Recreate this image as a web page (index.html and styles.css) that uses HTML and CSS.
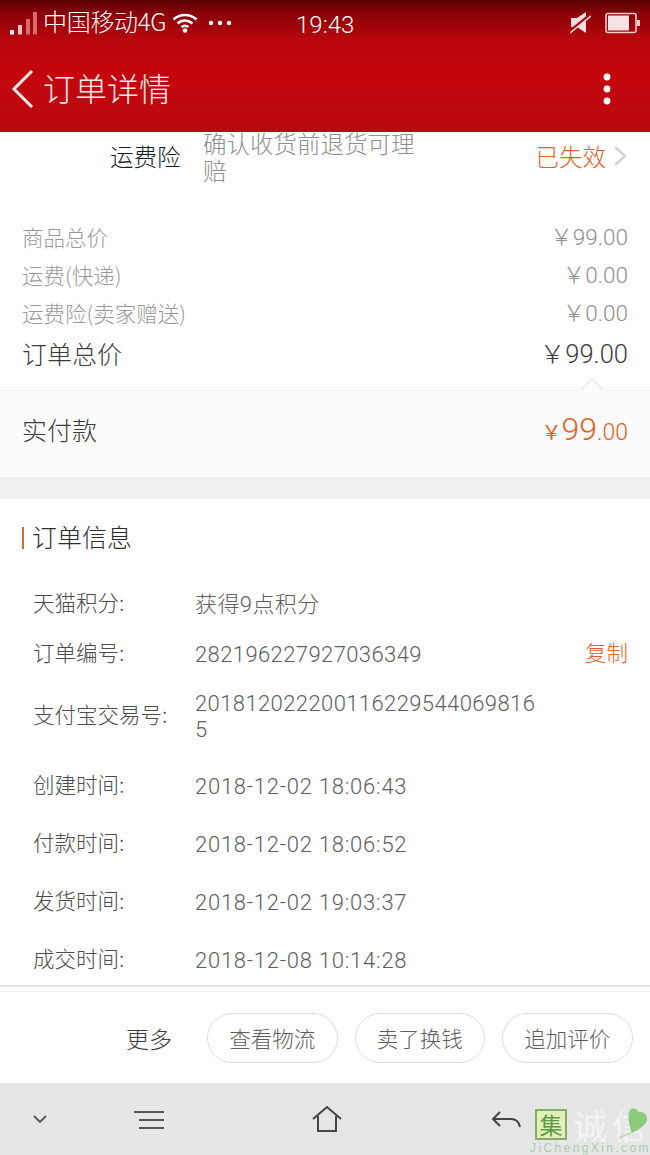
FILE: index.html
```html
<!DOCTYPE html>
<html lang="zh">
<head>
<meta charset="utf-8">
<title>订单详情</title>
<link rel="stylesheet" href="styles.css">
</head>
<body>
<header class="top">
  <div class="status">
    <div class="status-left">
      <svg class="signal" width="28" height="23" viewBox="0 0 28 23"><rect x="0" y="18" width="4" height="4.500" fill="#fff"/><rect x="8" y="13" width="4" height="9.500" fill="#f3c0c0"/><rect x="16" y="7" width="4" height="15.500" fill="#dd6a6a"/><rect x="23" y="0" width="4" height="22.500" fill="#dd6a6a"/></svg>
      <span class="carrier">中国移动4G</span>
      <svg class="wifi" width="26" height="22" viewBox="0 0 26 22" fill="none" stroke="#fff" stroke-width="2.400"><path d="M1.500 7.500C8 1.500 18 1.500 24.500 7.500"/><path d="M5.500 11.500C10 7.500 16 7.500 20.500 11.500"/><path d="M9.500 15C11.500 13.500 14.500 13.500 16.500 15"/><circle cx="13" cy="18.500" r="2.300" fill="#fff" stroke="none"/></svg>
      <svg class="more-dots" width="24" height="6" viewBox="0 0 24 6" fill="#fff"><circle cx="3" cy="3" r="2.200"/><circle cx="12" cy="3" r="2.200"/><circle cx="21" cy="3" r="2.200"/></svg>
    </div>
    <span class="clock">19:43</span>
    <div class="status-right">
      <svg width="21" height="22" viewBox="0 0 21 22"><path d="M1 6H7L16 0V21L7 15H1Z" fill="#f6dede"/><path d="M0 19L21 2" stroke="#a8080e" stroke-width="2.800"/><path d="M0 21L21 4" stroke="#f6dede" stroke-width="1.600"/></svg>
      <svg width="35" height="22" viewBox="0 0 35 22"><rect x="1" y="1.500" width="30" height="19" rx="2" fill="none" stroke="#f3d0d0" stroke-width="1.600"/><rect x="3" y="3.500" width="21" height="15" fill="#f6e2e2"/><rect x="32" y="8" width="3" height="6" fill="#f3d0d0"/></svg>
    </div>
  </div>
  <nav class="navbar">
    <svg class="back" width="24" height="40" viewBox="0 0 24 40" fill="none" stroke="#fbeaea" stroke-width="3"><path d="M21 2L3 20L21 38"/></svg>
    <h1 class="title">订单详情</h1>
    <svg class="kebab" width="8" height="32" viewBox="0 0 8 32" fill="#fff"><circle cx="4" cy="4" r="3.400"/><circle cx="4" cy="16" r="3.400"/><circle cx="4" cy="28" r="3.400"/></svg>
  </nav>
</header>

<main class="content">
  <section class="insurance">
    <span class="ins-label">运费险</span>
    <p class="ins-desc">确认收货前退货可理赔</p>
    <span class="ins-status">已失效</span>
    <svg class="chev" width="14" height="22" viewBox="0 0 14 22" fill="none" stroke="#d4d4d4" stroke-width="2.400"><path d="M2 2L12 11L2 20"/></svg>
  </section>

  <section class="prices">
    <div class="price-row"><span>商品总价</span><span class="num">￥99.00</span></div>
    <div class="price-row"><span>运费(快递)</span><span class="num">￥0.00</span></div>
    <div class="price-row"><span>运费险(卖家赠送)</span><span class="num">￥0.00</span></div>
    <div class="price-row total"><span>订单总价</span><span class="num">￥99.00</span></div>
  </section>

  <section class="paid">
    <span class="caret"></span>
    <span class="paid-label">实付款</span>
    <span class="paid-value"><span class="cur">￥</span><span class="big">99</span><span class="dec">.00</span></span>
  </section>

  <div class="gap"></div>

  <section class="info">
    <h2 class="info-title">订单信息</h2>
    <dl class="info-list">
      <div class="info-row r1"><dt>天猫积分:</dt><dd>获得9点积分</dd></div>
      <div class="info-row r2"><dt>订单编号:</dt><dd>282196227927036349</dd><a class="copy">复制</a></div>
      <div class="info-row r3"><dt>支付宝交易号:</dt><dd>2018120222001162295440698165</dd></div>
      <div class="info-row r4"><dt>创建时间:</dt><dd class="date">2018-12-02 18:06:43</dd></div>
      <div class="info-row r4"><dt>付款时间:</dt><dd class="date">2018-12-02 18:06:52</dd></div>
      <div class="info-row r4"><dt>发货时间:</dt><dd class="date">2018-12-02 19:03:37</dd></div>
      <div class="info-row r4"><dt>成交时间:</dt><dd class="date">2018-12-08 10:14:28</dd></div>
    </dl>
  </section>
</main>

<section class="actions">
  <span class="more">更多</span>
  <button class="pill">查看物流</button>
  <button class="pill">卖了换钱</button>
  <button class="pill">追加评价</button>
</section>

<footer class="sysnav">
  <svg class="s-down" width="14" height="8" viewBox="0 0 14 8" fill="none" stroke="#555" stroke-width="1.800"><path d="M1 1L7 7L13 1"/></svg>
  <svg class="s-menu" width="30" height="20" viewBox="0 0 30 20" fill="none" stroke="#555" stroke-width="2"><path d="M0 2H30M5 10H30M5 18H30"/></svg>
  <svg class="s-home" width="30" height="28" viewBox="0 0 30 28" fill="none" stroke="#444" stroke-width="2"><path d="M1 14L15 2L29 14M6 11V26H24V11"/></svg>
  <svg class="s-back" width="30" height="20" viewBox="0 0 30 20" fill="none" stroke="#444" stroke-width="2"><path d="M9 2L2 9L9 16M2 9H20C25 9 28 12 29 17"/></svg>
  <div class="mark">
    <div class="mark-top"><span class="mark-box">集</span><span class="mark-cn">诚信</span></div>
    <div class="mark-en">JiChengXin.com</div>
  </div>
  <svg class="s-leaf" width="33" height="32" viewBox="0 0 33 32"><path d="M13 3C16 0 20 1 21 5C26 4 31 8 30 13C28 19 20 24 15 26C12 18 10 8 13 3Z" fill="#8ccb78"/><path d="M15 25L2 31" stroke="#b5dba8" stroke-width="1.500" fill="none"/></svg>
</footer>
</body>
</html>
```
FILE: styles.css
```css
* { box-sizing: border-box; }
html, body { margin: 0; padding: 0; }
body {
  width: 650px;
  height: 1155px;
  overflow: hidden;
  background: #fff;
  font-family: "Noto Sans CJK SC", Roboto, sans-serif;
  font-weight: 300;
  color: #555;
  display: flex;
  flex-direction: column;
}

/* header */
.top {
  height: 132px;
  flex: none;
  color: #fff;
  background: linear-gradient(180deg, #5a0005 0, #8a0208 14px, #b8060c 40px, #c4060c 75px, #b80a10 132px);
}
.status {
  height: 46px;
  padding: 0 10px;
  display: flex;
  align-items: center;
  position: relative;
}
.status-left { display: flex; align-items: center; }
.carrier { font-size: 24px; line-height: 30px; margin: 0 0 5px 5px; letter-spacing: -0.300px; }
.wifi { margin-left: 6px; }
.more-dots { margin-left: 10px; }
.clock {
  position: absolute;
  left: 296px;
  top: 10px;
  font-family: Roboto, sans-serif;
  font-size: 24px;
  line-height: 30px;
  font-weight: 300;
}
.status-right { margin-left: auto; display: flex; align-items: center; gap: 14px; }
.navbar {
  height: 86px;
  display: flex;
  align-items: center;
  padding: 0 39px 0 11px;
}
.back { flex: none; }
.title { margin: 0 0 4px 8px; font-size: 32px; font-weight: 300; line-height: 40px; color: #fbeaea; }
.kebab { margin-left: auto; }

/* content */
.content { flex: 1; min-height: 0; }
.insurance {
  height: 69px;
  padding: 0 23px 22px 110px;
  display: flex;
  align-items: center;
}
.ins-label { width: 93px; flex: none; font-size: 23.500px; color: #0f1c25; }
.ins-desc { width: 225px; flex: none; margin: 2px 0 0; font-size: 23.500px; line-height: 27px; color: #8f8f8f; }
.ins-status { margin-left: auto; font-size: 23.500px; color: #e5601f; }
.chev { margin-left: 7px; }

.prices { padding: 16px 22px 0; height: 189px; }
.price-row {
  height: 38px;
  display: flex;
  justify-content: space-between;
  align-items: center;
  font-size: 21.500px;
  color: #999;
}
.price-row .num { font-family: Roboto, "Noto Sans CJK SC", sans-serif; font-size: 22.500px; font-weight: 300; color: #8f8f8f; padding-bottom: 2px; }
.price-row.total { height: 44px; font-size: 25px; color: #3c3c3c; }
.price-row.total .num { font-size: 25.500px; color: #3c3c3c; padding-bottom: 4px; }

.paid {
  position: relative;
  height: 87px;
  background: #fbfbfb;
  border-top: 1px solid #f2f2f2;
  padding: 0 22px 10px;
  display: flex;
  justify-content: space-between;
  align-items: center;
}
.caret {
  position: absolute;
  right: 50px;
  top: -10px;
  width: 16px;
  height: 16px;
  background: #fbfbfb;
  border-left: 1px solid #e4e4e4;
  border-top: 1px solid #e4e4e4;
  transform: rotate(45deg);
}
.paid-label { font-size: 25px; color: #3c3c3c; }
.paid-value { color: #e5601f; font-family: Roboto, "Noto Sans CJK SC", sans-serif; display: flex; align-items: baseline; font-weight: 300; }
.cur { font-size: 20px; font-weight: 400; }
.big { font-size: 32px; }
.dec { font-size: 23px; }
.gap { height: 22px; background: #f0f0f0; }

.info { padding-top: 28px; }
.info-title {
  margin: 0 0 0 22px;
  padding: 0 0 4px 8px;
  height: 22px;
  font-size: 25px;
  line-height: 22px;
  font-weight: 300;
  color: #2e2e2e;
  display: flex;
  align-items: center;
  border-left: 2px solid #e8652a;
}
.info-list { margin: 29px 0 0; padding: 0 22px 0 33px; }
.info-row { display: flex; align-items: center; font-size: 21.500px; }
.r1, .r2 { height: 50px; }
.r3 { height: 74px; margin-bottom: 4px; }
.r4 { height: 58px; }
.info-row dt { width: 162px; flex: none; color: #4c4c4c; padding-bottom: 4px; }
.info-row dd {
  margin: 0;
  width: 345px;
  font-family: Roboto, "Noto Sans CJK SC", sans-serif;
  font-size: 22px;
  line-height: 26px;
  color: #5e5e5e;
  font-weight: 300;
  word-break: break-all;
  letter-spacing: 0.400px;
  padding-top: 3px;
}
.info-row dd.date { letter-spacing: 0.750px; }
.copy { margin-left: auto; color: #e5601f; padding-bottom: 4px; }

/* actions */
.actions {
  height: 92px;
  flex: none;
  border-top: 1px solid #eee;
  padding: 0 0 0 126px;
  display: flex;
  align-items: center;
  background: #fff;
  box-shadow: 0 -4px 0 0 #fff, 0 -6px 0 0 #e6e6e6;
}
.more { width: 81px; flex: none; font-size: 23px; color: #3c3c3c; }
.pill {
  width: 130.500px;
  height: 50px;
  margin-right: 17px;
  flex: none;
  border: 1px solid #ddd;
  border-radius: 25px;
  background: #fff;
  font: inherit;
  font-size: 21.500px;
  color: #5e5e5e;
  padding: 0;
}
.pill:last-child { margin-right: 0; }

/* system nav */
.sysnav {
  height: 72px;
  flex: none;
  background: #e6e6e6;
  position: relative;
  overflow: hidden;
}
.sysnav svg { position: absolute; }
.s-down { left: 33px; top: 32px; }
.s-menu { left: 134px; top: 27px; }
.s-home { left: 312px; top: 22px; }
.s-back { left: 491px; top: 27px; }
.s-leaf { left: 617px; top: 24px; }
.mark { position: absolute; left: 530px; top: 26px; width: 120px; }
.mark-top { display: flex; align-items: center; height: 31px; }
.mark-box {
  width: 32px;
  height: 31px;
  flex: none;
  background: #e3efb6;
  border: 2px solid #7fb064;
  color: #5d9a48;
  font-size: 23px;
  line-height: 26px;
  text-align: center;
  margin-left: 5px;
  font-weight: 400;
}
.mark-cn { margin-left: 6px; font-size: 34px; line-height: 31px; color: #f3f3f3; font-weight: 400; letter-spacing: 5px; white-space: nowrap; }
.mark-en { font-family: "Liberation Sans", sans-serif; font-size: 12px; line-height: 12px; letter-spacing: 2.400px; color: #a9cdb0; margin-top: 2px; white-space: nowrap; }
```
